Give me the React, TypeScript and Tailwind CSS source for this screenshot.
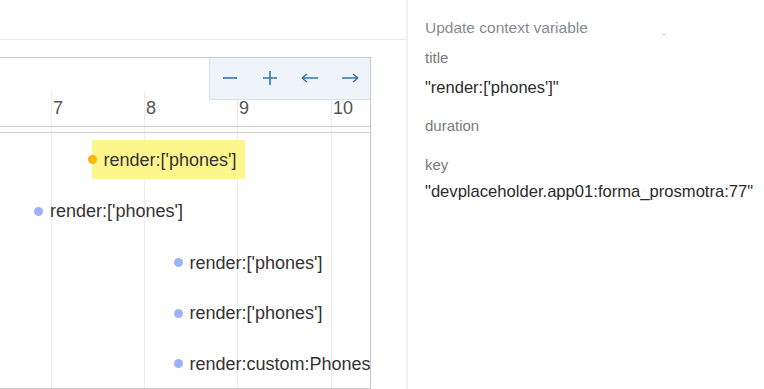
import React from 'react'

type TimelineItem = {
  label: string
  x: number // dot centre, px from left of the canvas
  y: number // dot centre, px from top of the canvas
  selected?: boolean
}

const ticks = [
  { label: '7', x: 51 },
  { label: '8', x: 144 },
  { label: '9', x: 237 },
  { label: '10', x: 331 },
]

const items: TimelineItem[] = [
  { label: "render:['phones']", x: 92, y: 101.5, selected: true },
  { label: "render:['phones']", x: 38.5, y: 153 },
  { label: "render:['phones']", x: 178, y: 204.5 },
  { label: "render:['phones']", x: 178, y: 255 },
  { label: 'render:custom:Phones', x: 178, y: 305.5 },
]

function Minus() {
  return (
    <svg width="16" height="16" viewBox="0 0 16 16" fill="none" stroke="#3a72ab" strokeWidth="1.6">
      <path d="M1 8h14" />
    </svg>
  )
}

function Plus() {
  return (
    <svg width="16" height="16" viewBox="0 0 16 16" fill="none" stroke="#3a72ab" strokeWidth="1.6">
      <path d="M1 8h14M8 1v14" />
    </svg>
  )
}

function ArrowLeft() {
  return (
    <svg width="18" height="16" viewBox="0 0 18 16" fill="none" stroke="#3a72ab" strokeWidth="1.4">
      <path d="M1 8h16M1 8l5-4M1 8l5 4" />
    </svg>
  )
}

function ArrowRight() {
  return (
    <svg width="18" height="16" viewBox="0 0 18 16" fill="none" stroke="#3a72ab" strokeWidth="1.4">
      <path d="M1 8h16M17 8l-5-4M17 8l-5 4" />
    </svg>
  )
}

function Timeline() {
  return (
    <div className="relative h-[332px] w-[371px] overflow-hidden border-t border-r border-b border-[#c8c8c8] bg-white">
      {/* grid lines */}
      {ticks.map((t) => (
        <div
          key={t.label}
          className="absolute top-[34px] bottom-0 w-px bg-[#ececec]"
          style={{ left: t.x }}
        />
      ))}
      {ticks.map((t) => (
        <div
          key={`l-${t.label}`}
          className="absolute top-[40px] text-[18px] leading-[20px] text-[#555]"
          style={{ left: t.x + 2 }}
        >
          {t.label}
        </div>
      ))}

      <div className="absolute top-[68px] left-0 right-0 h-px bg-[#cfcfcf]" />
      <div className="absolute top-[74px] left-0 right-0 h-px bg-[#cfcfcf]" />

      {items.map((it, i) => (
        <div
          key={i}
          className="absolute flex h-[20px] items-center whitespace-nowrap"
          style={{ left: it.x - 4.5, top: it.y - 10 }}
        >
          {it.selected && (
            <div className="absolute left-[4.5px] top-[-9.5px] h-[39px] w-[153px] bg-[#fdf68c]" />
          )}
          <span
            className={
              it.selected
                ? 'relative h-[9px] w-[9px] shrink-0 rounded-full bg-[#f7b900]'
                : 'relative h-[9px] w-[9px] shrink-0 rounded-full bg-[#9db3f5]'
            }
          />
          <span className="relative ml-[7px] text-[18px] leading-[20px] text-[#333]">{it.label}</span>
        </div>
      ))}

      {/* zoom / pan controls */}
      <div className="absolute top-0 right-0 flex h-[42px] w-[161px] border-l border-b border-[#d8e2eb] bg-[#eef4f9] pb-[2px]">
        <button className="flex w-[40px] items-center justify-center"><Minus /></button>
        <button className="flex w-[40px] items-center justify-center"><Plus /></button>
        <button className="flex w-[40px] items-center justify-center"><ArrowLeft /></button>
        <button className="flex w-[40px] items-center justify-center"><ArrowRight /></button>
      </div>
    </div>
  )
}

export default function App() {
  return (
    <div className="flex h-[389px] w-[764px] overflow-hidden bg-white font-['Liberation_Sans',Arial,sans-serif]">
      <div className="w-[406px] shrink-0">
        <div className="h-[40px] border-b border-[#e8e8e8]" />
        <div className="mt-[17px]">
          <Timeline />
        </div>
      </div>

      <div className="flex-1 border-l-2 border-[#f0f0f0] pl-[17px] pt-[18px]">
        <div className="flex items-end leading-[20px]">
          <span className="text-[15.5px] text-[#858b92]">Update context variable</span>
          <span className="mb-[3px] ml-[75px] h-px w-[2px] bg-[#c4c4c4]" />
        </div>
        <div className="mt-[10px] text-[15px] leading-[20px] text-[#7a7a7a]">title</div>
        <div className="mt-[9px] text-[16.5px] leading-[20px] text-[#2b2b2b]">"render:['phones']"</div>
        <div className="mt-[19px] text-[15px] leading-[20px] text-[#7a7a7a]">duration</div>
        <div className="mt-[19px] text-[15px] leading-[20px] text-[#7a7a7a]">key</div>
        <div className="mt-[7px] text-[16.6px] leading-[20px] text-[#2b2b2b]">"devplaceholder.app01:forma_prosmotra:77"</div>
      </div>
    </div>
  )
}
